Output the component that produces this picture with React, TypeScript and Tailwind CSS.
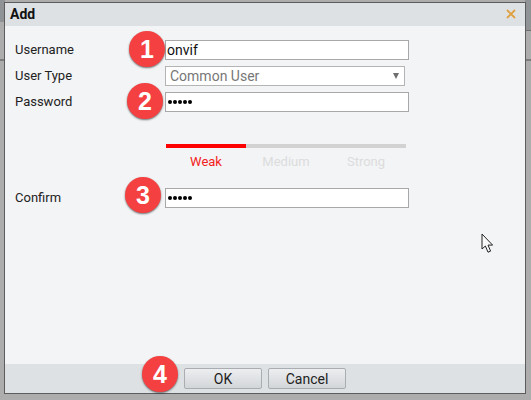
import { ReactNode } from "react";

function Badge({ n, className }: { n: number; className: string }) {
  return (
    <div
      className={`absolute flex h-[36px] w-[36px] items-center justify-center rounded-full bg-[#f44040] text-[25px] font-bold leading-none text-white shadow-[0_1px_2px_rgba(0,0,0,0.55)] font-['Liberation_Sans',sans-serif] ${className}`}
    >
      {n}
    </div>
  );
}

function Row({ label, children, className }: { label: string; children: ReactNode; className?: string }) {
  return (
    <div className={`flex h-5 items-center ${className ?? ""}`}>
      <label className="w-[150px] text-[13px] text-[#222]">{label}</label>
      {children}
    </div>
  );
}

function TextBox({ value }: { value: string }) {
  return (
    <div className="flex h-5 w-[244px] items-center border border-[#a8a8a8] bg-white pl-[1px] text-[14px] text-[#111]">
      {value}
    </div>
  );
}

function Dots() {
  return (
    <div className="flex h-5 w-[244px] items-center gap-[1px] border border-[#a8a8a8] bg-white pl-[2px]">
      {[0, 1, 2, 3, 4].map((i) => (
        <span key={i} className="h-[4px] w-[4px] rounded-full bg-black" />
      ))}
    </div>
  );
}

function FooterButton({ label }: { label: string }) {
  return (
    <button className="h-[21px] w-[78px] rounded-[2px] border border-[#a9adb1] bg-gradient-to-b from-[#eceef0] to-[#d3d6d9] text-[14px] leading-none text-[#222]">
      {label}
    </button>
  );
}

export default function App() {
  return (
    <div className="relative h-[400px] w-[531px] overflow-hidden bg-[#adadad] pl-[4px] pt-[2px] font-['Roboto',sans-serif]">
      {/* page behind the dialog, only its edges show */}
      <div className="absolute left-0 top-0 h-[22px] w-[5px] bg-[#8f9396]" />
      <div className="absolute right-0 top-0 h-[31px] w-[6px] border-b border-[#6f6f6f] bg-[#8f9396]" />
      <div className="absolute left-0 top-[59px] h-[2px] w-full bg-[#7d7d7d]" />

      <div className="relative flex h-[392px] w-[522px] flex-col border border-[#5c5c5c] bg-[#f3f4f6]">
        <div className="flex h-[23px] items-center justify-between bg-[#dee1e4] pl-[5px] pr-[9px]">
          <span className="text-[14px] font-bold text-[#111]">Add</span>
          <svg width="10" height="10" viewBox="0 0 10 10" className="mb-[2px]">
            <path d="M1 1l8 8M9 1l-8 8" stroke="#dfa040" strokeWidth="1.8" fill="none" />
          </svg>
        </div>

        <div className="flex flex-1 flex-col pl-[10px] pt-[14px]">
          <Row label="Username">
            <TextBox value="onvif" />
          </Row>
          <Row label="User Type" className="mt-[6px]">
            <div className="flex h-5 w-[240px] items-center justify-between border border-[#b4b4b4] bg-white pl-[4px] pr-[3px] text-[14px] text-[#777]">
              <span>Common User</span>
              <span className="mr-[2px] h-0 w-0 border-x-[3.5px] border-t-[6px] border-x-transparent border-t-[#6e6e6e]" />
            </div>
          </Row>
          <Row label="Password" className="mt-[6px]">
            <Dots />
          </Row>

          <div className="ml-[151px] mt-[32px] w-[240px]">
            <div className="flex h-[4px] bg-[#d2d2d2]">
              <div className="w-[80px] bg-[#ff0000]" />
            </div>
            <div className="mt-[4px] grid grid-cols-3 text-center text-[13px] text-[#dcdcdc]">
              <span className="text-[#f32020]">Weak</span>
              <span>Medium</span>
              <span>Strong</span>
            </div>
          </div>

          <Row label="Confirm" className="mt-[16px]">
            <Dots />
          </Row>
        </div>

        <div className="flex h-[29px] items-center gap-[6px] bg-[#dee1e4] pl-[179px]">
          <FooterButton label="OK" />
          <FooterButton label="Cancel" />
        </div>

        <Badge n={1} className="left-[124px] top-[28px]" />
        <Badge n={2} className="left-[122px] top-[80px]" />
        <Badge n={3} className="left-[120px] top-[174px]" />
        <Badge n={4} className="left-[137px] top-[353px]" />

        <svg width="14" height="21" viewBox="0 0 14 21" className="absolute left-[476px] top-[230px]">
          <path
            d="M1 1v15l3.4-3 2.6 6.2 2.6-1.1-2.6-6h4.6z"
            fill="#f8f8f8"
            stroke="#222"
            strokeWidth="1"
            strokeLinejoin="miter"
          />
        </svg>
      </div>
    </div>
  );
}
